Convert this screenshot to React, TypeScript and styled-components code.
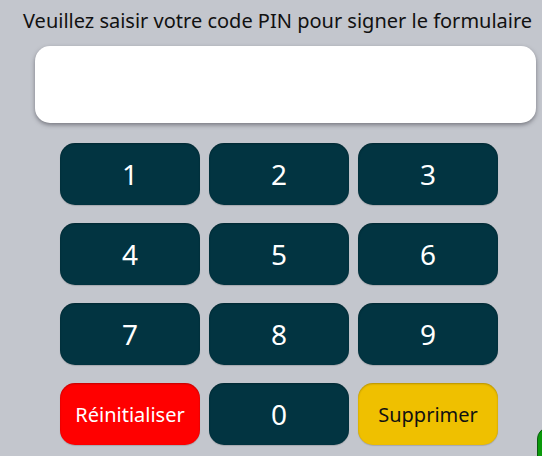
import styled, { createGlobalStyle } from "styled-components";

const GlobalStyle = createGlobalStyle`
  html, body {
    margin: 0;
    padding: 0;
    background: #c3c6cd;
    overflow: hidden;
  }
  body {
    font-family: "Noto Sans", "Open Sans", sans-serif;
  }
`

const Root = styled.div`
  position: relative;
  width: 542px;
  height: 456px;
  overflow: hidden;
  background: #c3c6cd;
`

const Title = styled.p`
  margin: 0;
  padding: 7px 0 0 23px;
  font-size: 20px;
  line-height: 28px;
  color: #111;
  white-space: nowrap;
`

const PinField = styled.div`
  margin: 11px 0 0 35px;
  width: 501px;
  height: 77px;
  background: #fff;
  border-radius: 15px;
  box-shadow: 0 2px 4px rgba(60, 60, 70, 0.55);
`

const Keypad = styled.div`
  display: grid;
  grid-template-columns: repeat(3, 140px);
  grid-auto-rows: 62px;
  column-gap: 9px;
  row-gap: 18px;
  margin: 20px 0 0 60px;
`

type Variant = "digit" | "reset" | "delete";

const colors: Record<Variant, { bg: string; fg: string }> = {
  digit: { bg: "#023441", fg: "#ffffff" },
  reset: { bg: "#ff0000", fg: "#ffffff" },
  delete: { bg: "#efc000", fg: "#111111" },
};

const Key = styled.button<{ $variant: Variant }>`
  display: flex;
  align-items: center;
  justify-content: center;
  border: none;
  border-radius: 15px;
  padding: 0;
  background: ${(p) => colors[p.$variant].bg};
  color: ${(p) => colors[p.$variant].fg};
  font-family: "Noto Sans", "Open Sans", sans-serif;
  font-size: ${(p) => (p.$variant === "digit" ? "28px" : "20px")};
  box-shadow: inset 0 1px 2px rgba(0, 0, 0, 0.25), 0 1px 1px rgba(0, 0, 0, 0.15);
  cursor: pointer;
`

const GreenTab = styled.div`
  position: absolute;
  left: 537px;
  top: 427px;
  width: 60px;
  height: 50px;
  background: #0a9a0a;
  border: 1px solid #0b5a10;
  border-radius: 12px;
`

const digits = ["1", "2", "3", "4", "5", "6", "7", "8", "9"];

const App = () => {
  return (
    <Root>
      <GlobalStyle />
      <Title>Veuillez saisir votre code PIN pour signer le formulaire</Title>
      <PinField />
      <Keypad>
        {digits.map((d) => (
          <Key key={d} $variant="digit">{d}</Key>
        ))}
        <Key $variant="reset">Réinitialiser</Key>
        <Key $variant="digit">0</Key>
        <Key $variant="delete">Supprimer</Key>
      </Keypad>
      <GreenTab />
    </Root>
  );
}

export default App;
